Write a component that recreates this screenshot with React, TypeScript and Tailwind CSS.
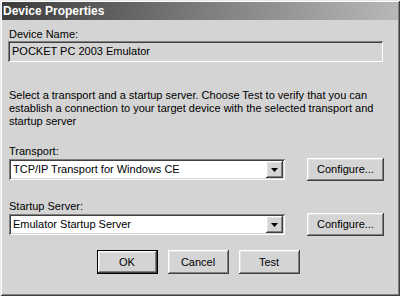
const font = "font-['Liberation_Sans',Arial,sans-serif]";

const raised =
  "shadow-[inset_-1px_-1px_#404040,inset_1px_1px_#ffffff,inset_-2px_-2px_#808080,inset_2px_2px_#e4e4e4]";
const sunken =
  "shadow-[inset_1px_1px_#808080,inset_-1px_-1px_#ffffff,inset_2px_2px_#404040,inset_-2px_-2px_#d4d4d4]";

function Button({ label, primary }: { label: string; primary?: boolean }) {
  return (
    <button
      type="button"
      className={`flex items-center justify-center bg-[#d4d4d4] text-[11px] text-black ${
        primary ? "border border-black" : ""
      } h-[24px] w-[61px] ${raised}`}
    >
      {label}
    </button>
  );
}

function Select({ value }: { value: string }) {
  return (
    <div className={`flex h-[21px] w-[276px] items-center bg-white p-[2px] ${sunken}`}>
      <span className="flex-1 pl-[2px] text-[11px] text-black">{value}</span>
      <div className={`flex h-[17px] w-[17px] items-center justify-center bg-[#d4d4d4] ${raised}`}>
        <svg width="7" height="4" viewBox="0 0 7 4">
          <path d="M0 0h7L3.5 4z" fill="#000" />
        </svg>
      </div>
    </div>
  );
}

function ConfigureButton() {
  return (
    <button
      type="button"
      className={`flex h-[23px] w-[77px] items-center justify-center bg-[#d4d4d4] text-[11px] text-black ${raised}`}
    >
      Configure...
    </button>
  );
}

export default function App() {
  return (
    <div
      className={`${font} flex h-[296px] w-[400px] flex-col bg-[#d4d4d4] shadow-[inset_1px_1px_#e8e8e8,inset_-1px_-1px_#404040,inset_2px_2px_#ffffff,inset_-2px_-2px_#808080]`}
    >
      <div className="mx-[2px] mt-[2px] flex h-[18px] items-center bg-gradient-to-r from-[#3c3c3c] via-[#7c7c7c] to-[#b8b8b8] pl-[1px] text-[12px] font-bold text-white">
        Device Properties
      </div>

      <div className="flex flex-col px-[8px] text-[11px] text-black">
        <div className="mt-[7px] h-[14px] pl-[1px] leading-[14px]">Device Name:</div>
        <div className={`h-[21px] w-[375px] px-[4px] leading-[21px] ${sunken}`}>
          POCKET PC 2003 Emulator
        </div>

        <p className="mt-[27px] pl-[1px] leading-[13px]">
          Select a transport and a startup server. Choose Test to verify that you can
          establish a connection to your target device with the selected transport and
          startup server
        </p>

        <div className="mt-[17px] h-[13px] pl-[1px] leading-[13px]">Transport:</div>
        <div className="flex items-center justify-between pl-[1px] pr-[8px]">
          <Select value="TCP/IP Transport for Windows CE" />
          <ConfigureButton />
        </div>

        <div className="mt-[19px] h-[13px] pl-[1px] leading-[13px]">Startup Server:</div>
        <div className="flex items-center justify-between pl-[1px] pr-[8px]">
          <Select value="Emulator Startup Server" />
          <ConfigureButton />
        </div>

        <div className="mt-[14px] flex justify-center gap-[10px] pr-[4px]">
          <Button label="OK" primary />
          <Button label="Cancel" />
          <Button label="Test" />
        </div>
      </div>
    </div>
  );
}
